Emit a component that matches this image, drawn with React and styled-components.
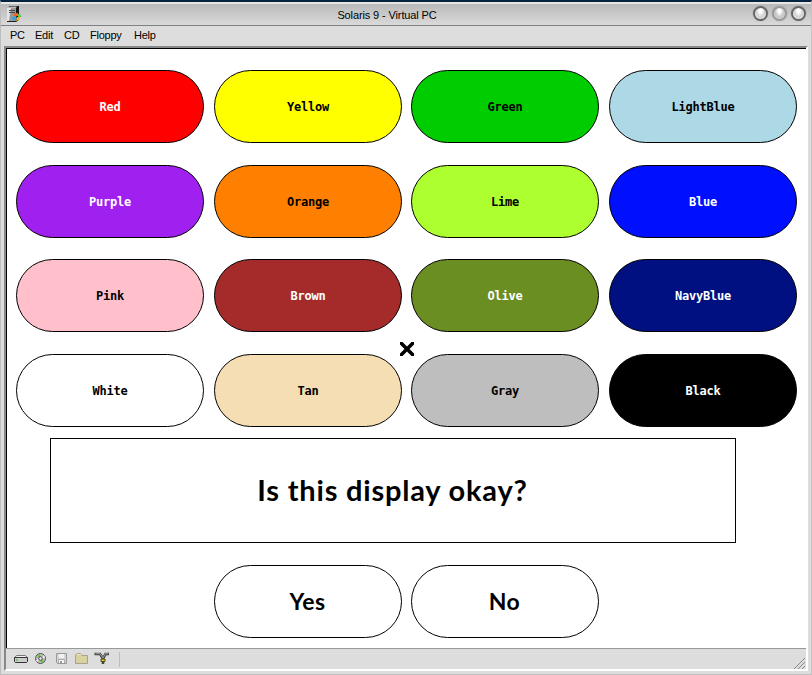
import React from "react";
import styled, { createGlobalStyle } from "styled-components";

const Global = createGlobalStyle`
  * { box-sizing: border-box; }
  body { margin: 0; overflow: hidden; }
`;

const Window = styled.div`
  width: 812px;
  height: 675px;
  display: flex;
  flex-direction: column;
  background: #dddddd;
  border-top: 2px solid #07243f;
  border-left: 1px solid #bdbdbd;
  border-right: 1px solid #c4c4c4;
  border-bottom: 1px solid #bdbdbd;
  font-family: "Liberation Sans", Arial, sans-serif;
  font-size: 11px;
  color: #000;
`;

const TitleBar = styled.header`
  height: 24px;
  flex: none;
  display: grid;
  grid-template-columns: 60px 1fr 60px;
  align-items: center;
  padding: 0 5px 0 5px;
  border-top: 2px solid #e6e6e6;
  border-bottom: 1px solid #808080;
  background: linear-gradient(#bababa, #d9d9d9);
`;

const Title = styled.h1`
  margin: 0;
  padding: 0 38px 0 0;
  font-size: 11px;
  font-weight: 400;
  line-height: 14px;
  letter-spacing: -0.12px;
  text-align: center;
  white-space: nowrap;
`;

const TitleButtons = styled.div`
  display: flex;
  justify-content: flex-end;
  gap: 4px;
  padding-bottom: 2px;
`;

const Orb = styled.span`
  width: 15px;
  height: 15px;
  border-radius: 50%;
  border: 2px solid ${(p) => (p.$dim ? "#999" : "#666")};
  background: radial-gradient(ellipse at 50% 25%, #fff 0 14%, ${(p) => (p.$dim ? "#c6c6c6" : "#d0d0d0")} 55%, ${(p) => (p.$dim ? "#d8d8d8" : "#fff")} 90%);
  box-shadow: 0 0 1px #777;
`;

const MenuBar = styled.nav`
  height: 20px;
  flex: none;
  display: flex;
  gap: 12px;
  padding: 3px 9px;
  line-height: 13px;
`;

const MenuItem = styled.span`
  width: ${(p) => p.$w}px;
  white-space: nowrap;
  letter-spacing: -0.25px;
`;

const Inset = styled.div`
  flex: 1;
  min-height: 0;
  display: flex;
  flex-direction: column;
  margin: 0 3px 3px 3px;
  border-top: 2px solid #888;
  border-left: 2px solid #888;
  border-right: 2px solid #fff;
  border-bottom: 2px solid #fff;
`;

const Screen = styled.main`
  position: relative;
  height: 600px;
  flex: none;
  background: #fff;
  border-top: 1px solid #000;
  border-left: 1px solid #000;
  padding: 21px 0 0 9px;
`;

const Swatches = styled.div`
  display: grid;
  grid-template-columns: 198px 197px 198px 188px;
  grid-template-rows: 95px 94px 95px 73px;
`;

const Pill = styled.button`
  width: 188px;
  height: 73px;
  padding: 1px 0 0;
  border: 1px solid #000;
  border-radius: 37px;
  background: ${(p) => p.$bg || "#fff"};
  color: ${(p) => (p.$light ? "#fff" : "#000")};
  font: bold 12px/14px "DejaVu Sans Mono", monospace;
  letter-spacing: -0.22px;
`;

const Answer = styled(Pill)`
  padding: 0 1px 1px 0;
  font: 700 23px/26px Lato, sans-serif;
  letter-spacing: 0.5px;
`;

const Question = styled.section`
  width: 686px;
  height: 105px;
  margin: 11px 0 22px 34px;
  display: flex;
  align-items: center;
  justify-content: center;
  border: 1px solid #000;
  font: 700 29px/34px Lato, sans-serif;
  letter-spacing: 0.8px;
  white-space: nowrap;
  padding: 0 1px 1px 0;
`;

const Answers = styled.div`
  display: flex;
  gap: 9px;
  padding-left: 198px;
`;

const Cursor = styled.svg`
  position: absolute;
  left: 392px;
  top: 293px;
`;

const StatusBar = styled.footer`
  flex: 1;
  display: flex;
  align-items: flex-start;
  justify-content: space-between;
  border-top: 1px solid #999;
  background: #dddddd;
`;

const Devices = styled.div`
  display: flex;
  align-items: center;
  gap: 4.3px;
  padding: 2px 0 0 7px;
`;

const Divider = styled.i`
  width: 1px;
  height: 15px;
  margin-left: 5px;
  background: #bbbbd0;
`;

const Grip = styled.svg`
  margin: 9px 1px 0 0;
`;

const colors = [
  ["Red", "#ff0000", 1], ["Yellow", "#ffff00"], ["Green", "#00cd00"], ["LightBlue", "#add8e6"],
  ["Purple", "#a020f0", 1], ["Orange", "#ff8000"], ["Lime", "#adff2f"], ["Blue", "#0010ff", 1],
  ["Pink", "#ffc0cb"], ["Brown", "#a52a2a", 1], ["Olive", "#6b8e23", 1], ["NavyBlue", "#001080", 1],
  ["White", "#ffffff"], ["Tan", "#f5deb3"], ["Gray", "#bebebe"], ["Black", "#000000", 1],
];

const menus = [["PC", 13], ["Edit", 17], ["CD", 14], ["Floppy", 32], ["Help", 22]];

const AppIcon = () => (
  <svg width="17" height="17" viewBox="0 0 17 17">
    <path d="M3 0H13V14L10 16H2Z" fill="#161616" />
    <path d="M1 2L4 0.500H11L9.500 2.500Z" fill="#bbb" />
    <path d="M1 2H10V15H1Z" fill="#999" />
    <path d="M1 2H5L3 15H1Z" fill="#e4e4e4" />
    <path d="M3 4.500H9M3 6.500H9" stroke="#444" />
    <path d="M1 15.500H10" stroke="#222" />
    <path d="M7 9L9 7H12V10L9 10.500Z" fill="#f26322" />
    <path d="M12 8H14L15.500 11H12Z" fill="#55c83f" />
    <path d="M6 11L9 10.500L11 12L9.500 15L7 14Z" fill="#2ba7ed" />
    <path d="M11 11L14 11.500L13 14L10 15Z" fill="#f5b22e" />
  </svg>
);

const DriveIcon = () => (
  <svg width="16" height="16" viewBox="0 0 16 16">
    <path d="M3.500 4.500H12.500L14.500 7V10.500L13.500 11.500H2.500L1.500 10.500V7Z" fill="#f2f2f2" stroke="#777" />
    <path d="M1.500 6.500H14.500V10.500L13.500 11.500H2.500L1.500 10.500Z" fill="#ccc" stroke="#333" />
    <path d="M3 9H5" stroke="#3a3" />
  </svg>
);

const DiscIcon = () => (
  <svg width="16" height="16" viewBox="0 0 16 16">
    <circle cx="7.500" cy="7.500" r="5" fill="#bcbcbc" stroke="#555" />
    <path d="M7.500 7.500L4 4.500L7 3ZM7.500 7.500L11 10.500L8 12Z" fill="#50d51a" />
    <path d="M7.500 7.500L3 9L4 11ZM7.500 7.500L11 4L12 7Z" fill="#eee" />
    <circle cx="7.500" cy="7.500" r="1.800" fill="#eee" stroke="#444" />
  </svg>
);

const FloppyIcon = () => (
  <svg width="16" height="16" viewBox="0 0 16 16">
    <path d="M2.500 2.500H12.500V12.500H3.500L2.500 11.500Z" fill="#d4d4d4" stroke="#999" />
    <path d="M5 3H10V7H5Z" fill="#f2f2f2" />
    <path d="M4.500 12V8.500H10.500V12" fill="#f5f5f5" stroke="#aaa" />
    <path d="M6 10H8V12H6Z" fill="#999" />
  </svg>
);

const FolderIcon = () => (
  <svg width="16" height="16" viewBox="0 0 16 16">
    <path d="M2.500 3L3.500 2.500H6.500L8 4.500H13.500V12.500H1.500V4Z" fill="#d9d2a0" stroke="#a8a28a" />
    <path d="M3 3.500H7" stroke="#eee8c8" />
  </svg>
);

const NetworkIcon = () => (
  <svg width="16" height="16" viewBox="0 0 16 16">
    <path d="M0.500 3H6L9 7.500V13M15 3H11.500L9 7.500" fill="none" stroke="#444" strokeWidth="2.600" />
    <path d="M1.500 2.700H6L9 7L11.500 2.700H14" fill="none" stroke="#aaa" strokeWidth="0.900" />
    <path d="M7 8H11V10.500H7Z" fill="#dbc820" stroke="#554d10" />
  </svg>
);

export default function App() {
  return (
    <>
      <Global />
      <Window>
        <TitleBar>
          <AppIcon />
          <Title>Solaris 9 - Virtual PC</Title>
          <TitleButtons>
            <Orb />
            <Orb $dim />
            <Orb />
          </TitleButtons>
        </TitleBar>
        <MenuBar>
          {menus.map(([m, w]) => (
            <MenuItem key={m} $w={w}>{m}</MenuItem>
          ))}
        </MenuBar>
        <Inset>
          <Screen>
            <Swatches>
              {colors.map(([name, bg, light]) => (
                <Pill key={name} $bg={bg} $light={light}>{name}</Pill>
              ))}
            </Swatches>
            <Question>Is this display okay?</Question>
            <Answers>
              <Answer>Yes</Answer>
              <Answer>No</Answer>
            </Answers>
            <Cursor width="16" height="14" viewBox="0 0 16 14">
              <path d="M1 0H3.500L8 4.500L12.500 0H15V2.500L10.500 7L15 11.500V14H12.500L8 9.500L3.500 14H1V11.500L5.500 7L1 2.500Z" fill="#000" />
            </Cursor>
          </Screen>
          <StatusBar>
            <Devices>
              <DriveIcon />
              <DiscIcon />
              <FloppyIcon />
              <FolderIcon />
              <NetworkIcon />
              <Divider />
            </Devices>
            <Grip width="11" height="11" viewBox="0 0 11 11">
              <path d="M0 11L11 0M4 11L11 4M8 11L11 8" stroke="#888" strokeWidth="1" />
            </Grip>
          </StatusBar>
        </Inset>
      </Window>
    </>
  );
}
